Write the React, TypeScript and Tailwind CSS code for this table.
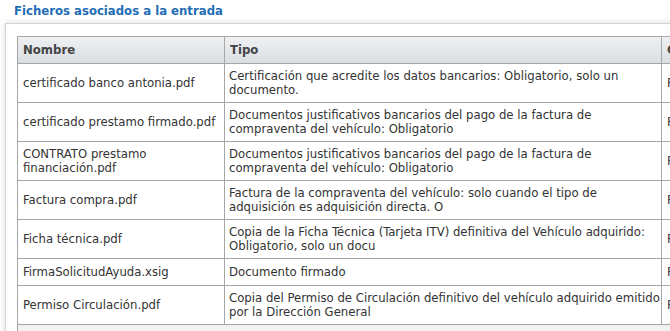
const files = [
  {
    name: ["certificado banco antonia.pdf"],
    type: ["Certificación que acredite los datos bancarios: Obligatorio, solo un", "documento."],
  },
  {
    name: ["certificado prestamo firmado.pdf"],
    type: ["Documentos justificativos bancarios del pago de la factura de", "compraventa del vehículo: Obligatorio"],
  },
  {
    name: ["CONTRATO prestamo", "financiación.pdf"],
    type: ["Documentos justificativos bancarios del pago de la factura de", "compraventa del vehículo: Obligatorio"],
  },
  {
    name: ["Factura compra.pdf"],
    type: ["Factura de la compraventa del vehículo: solo cuando el tipo de", "adquisición es adquisición directa. O"],
  },
  {
    name: ["Ficha técnica.pdf"],
    type: ["Copia de la Ficha Técnica (Tarjeta ITV) definitiva del Vehículo adquirido:", "Obligatorio, solo un docu"],
  },
  {
    name: ["FirmaSolicitudAyuda.xsig"],
    type: ["Documento firmado"],
  },
  {
    name: ["Permiso Circulación.pdf"],
    type: ["Copia del Permiso de Circulación definitivo del vehículo adquirido emitido", "por la Dirección General"],
  },
];

const cell = "h-[27px] border border-[#a6a6a6] py-[5px] align-middle";
const head = "h-[27px] border border-[#a6a6a6] px-[5px] text-left font-bold text-[#444]";

function Lines({ lines }: { lines: string[] }) {
  return (
    <>
      {lines.map((l) => (
        <div key={l} className="whitespace-nowrap">
          {l}
        </div>
      ))}
    </>
  );
}

export default function App() {
  return (
    <div className="w-[670px] h-[331px] overflow-hidden bg-white font-['DejaVu_Sans_Condensed',_'DejaVu_Sans',_sans-serif]">
      <h2 className="pl-[14px] pt-[3px] text-[13px] leading-4 font-bold text-[#1f6db5]">
        Ficheros asociados a la entrada
      </h2>
      <div className="mt-[4px] ml-[5px] w-[800px] border-l border-t border-[#d4d4d4] bg-white pl-[11px] pt-[12px] shadow-[0_0_7px_rgba(0,0,0,0.14)]">
        <table className="w-[764px] table-fixed border-collapse text-[13px] leading-[14px] text-[#333]">
          <thead>
            <tr className="bg-gradient-to-b from-[#eef0f3] to-[#d9dee3]">
              <th className={`w-[207px] ${head}`}>Nombre</th>
              <th className={`w-[437px] ${head}`}>Tipo</th>
              <th className={`w-[120px] ${head}`}>Comentario</th>
            </tr>
          </thead>
          <tbody>
            {files.map((f) => (
              <tr key={f.name[0]}>
                <td className={`${cell} px-[5px]`}>
                  <Lines lines={f.name} />
                </td>
                <td className={`${cell} pl-[4px] pr-0`}>
                  <Lines lines={f.type} />
                </td>
                <td className={`${cell} px-[5px]`}>Fichero adjunto</td>
              </tr>
            ))}
          </tbody>
          <tfoot>
            <tr>
              <td colSpan={3} className="h-[24px] border border-[#a6a6a6] bg-[#f1f1f1]"></td>
            </tr>
          </tfoot>
        </table>
      </div>
    </div>
  );
}
